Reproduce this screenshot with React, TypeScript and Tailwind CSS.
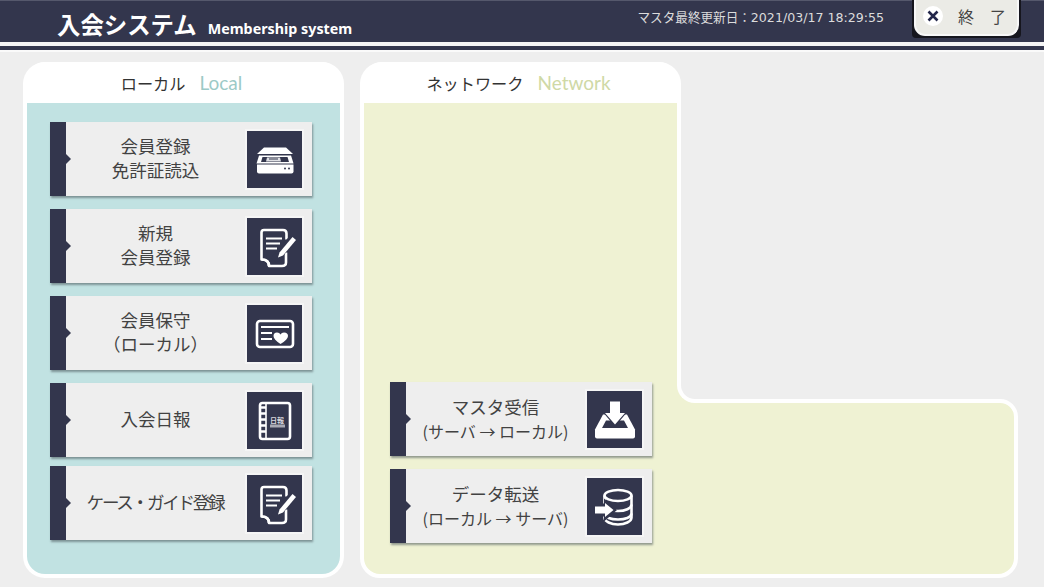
import type { ReactNode } from "react";

const jp = "font-['Noto_Sans_CJK_JP',sans-serif]";

const ScannerIcon = () => (
  <svg viewBox="0 0 55 56" className="w-full h-full">
    <path d="M17 16 H39 L46 22.5 H10 Z" fill="#fff" />
    <path d="M12 24 H44 L46.5 32 H9.5 Z" fill="#fff" />
    <path d="M15.5 25.5 H40.5 L42 30.5 H14 Z" fill="#33364d" />
    <path d="M20 26 H33 L34 30 H19 Z" fill="#dfe0e4" />
    <path d="M22 27.5 H31" stroke="#33364d" strokeWidth="1" />
    <path d="M10 33 H46.5 V40 Q46.5 42 44.5 42 H12 Q10 42 10 40 Z" fill="#fff" />
    <circle cx="38" cy="37" r="1" fill="#33364d" />
    <circle cx="42" cy="37" r="1" fill="#33364d" />
  </svg>
);

const NoteIcon = () => (
  <svg viewBox="0 0 55 56" className="w-full h-full">
    <path
      d="M39 34 V44 Q39 47.5 35 47.5 H22 Q22 41 14.5 41 V14 Q14.5 11.5 17 11.5 H36 Q39.5 11.5 39.5 15 V21"
      fill="none"
      stroke="#fff"
      strokeWidth="2.6"
      strokeLinejoin="round"
    />
    <path d="M14.5 41 Q22 41 22 47.5" fill="none" stroke="#fff" strokeWidth="2.6" />
    <path d="M19 20 H35 M19 25 H33 M19 30 H30" stroke="#fff" strokeWidth="2.2" />
    <path d="M27 42 L46 19.5" stroke="#33364d" strokeWidth="8" />
    <path d="M32.5 34 L45.5 18.5 L49 21.5 L36 37 L31 39 Z" fill="#fff" />
  </svg>
);

const CardIcon = () => (
  <svg viewBox="0 0 55 56" className="w-full h-full">
    <rect x="10" y="15.5" width="36" height="26" rx="3" fill="none" stroke="#fff" strokeWidth="2.6" />
    <path d="M14 21.5 H42 M14 27.5 H25 M14 33.5 H25" stroke="#fff" strokeWidth="2" />
    <path d="M33.5 38.5 Q26.5 34 26.5 30.5 Q26.5 27 30 27 Q32.5 27 33.5 29 Q34.5 27 37 27 Q41 27 41 30.5 Q41 34 33.5 38.5 Z" fill="#fff" />
  </svg>
);

const DiaryIcon = () => (
  <svg viewBox="0 0 55 56" className="w-full h-full">
    <rect x="13" y="10.5" width="30" height="36" rx="2.5" fill="none" stroke="#fff" strokeWidth="2.6" />
    <path d="M19 11 V46" stroke="#fff" strokeWidth="1.6" />
    <path d="M14 15 H19 M14 21 H19 M14 27 H19 M14 33 H19 M14 39 H19" stroke="#fff" strokeWidth="2.4" />
    <text x="23" y="30.5" fontSize="7" fontWeight="700" fill="#d8d8dc" fontFamily="Noto Sans CJK JP">
      日報
    </text>
    <rect x="23" y="32" width="15" height="3" fill="#a9aab4" />
  </svg>
);

const InboxIcon = () => (
  <svg viewBox="0 0 55 56" className="w-full h-full">
    <path d="M16 23 H40 L48 38 V45 Q48 47 46 47 H10 Q8 47 8 45 V38 Z" fill="#fff" />
    <path d="M19 29 H37 L41 36.5 H15 Z" fill="#33364d" />
    <path d="M21 9 H35 V19 H41.5 L28 35 L14.5 19 H21 Z" fill="#33364d" />
    <path d="M23 10 H33 V21.5 H38 L28 33 L18 21.5 H23 Z" fill="#fff" />
  </svg>
);

const DatabaseIcon = () => (
  <svg viewBox="0 0 55 56" className="w-full h-full">
    <g fill="none" stroke="#fff" strokeWidth="2.6">
      <ellipse cx="31" cy="17" rx="13.5" ry="5.5" />
      <path d="M17.5 17 V39 C17.5 43 24 46 31 46 C38 46 44.5 43 44.5 39 V17" />
      <path d="M17.5 26 C17.5 30 24 32.5 31 32.5 C38 32.5 44.5 30 44.5 26" />
      <path d="M17.5 35 C17.5 39 24 41 31 41 C38 41 44.5 39 44.5 35" />
    </g>
    <path d="M6 25 H17 V20 L30 31.5 L17 43 V38 H6 Z" fill="#33364d" />
    <path d="M8 28 H18 V24.5 L26.5 31.5 L18 38.5 V35 H8 Z" fill="#fff" />
  </svg>
);

interface MenuButtonProps {
  lines: string[];
  icon: ReactNode;
  small?: boolean;
  tight?: boolean;
  className?: string;
}

const MenuButton = ({ lines, icon, small, tight, className = "" }: MenuButtonProps) => (
  <div
    className={`relative flex items-center w-[262px] h-[74px] bg-[#eeeeee] shadow-[1px_2px_2px_rgba(70,80,85,0.55)] ${className}`}
  >
    <div className="relative self-stretch w-[16px] bg-[#33364d]">
      <div className="absolute left-full top-1/2 -translate-y-1/2 border-y-[5px] border-l-[5px] border-y-transparent border-l-[#33364d]" />
    </div>
    <div
      className={`flex-1 text-center text-[17.5px] leading-[24px] text-[#424242] ${jp} ${
        small ? "" : "pb-[2px]"
      } ${tight ? "tracking-[-2.2px] pr-[3px]" : "pr-[2px]"}`}
    >
      {lines.map((line, idx) => (
        <div key={idx} className={small && idx === 1 ? "text-[16px]" : ""}>
          {line}
        </div>
      ))}
    </div>
    <div className="w-[55px] h-[57px] mr-[10px] bg-[#33364d] ring-2 ring-[#f5f5f5]">{icon}</div>
  </div>
);

const PanelTitle = ({ ja, en, color }: { ja: string; en: string; color: string }) => (
  <div className="h-[41px] flex items-center justify-center gap-[14px] pt-px pr-[4px] bg-white rounded-t-[18px]">
    <span className={`text-[16.2px] text-[#333] ${jp}`}>{ja}</span>
    <span className={`text-[19px] font-['Lato',sans-serif] ${color}`}>{en}</span>
  </div>
);

export default function App() {
  return (
    <div className="w-[1044px] h-[587px] overflow-hidden bg-[#eeeeee]">
      {/* Header */}
      <div className="h-[42px] flex items-start bg-[#33364d] border-t border-[#55586c] text-white">
        <span className={`ml-[57px] mt-[6px] text-[23.4px] leading-[34px] font-bold ${jp}`}>入会システム</span>
        <span className="ml-[11px] mt-[17px] text-[14.3px] leading-[22px] font-bold font-['Noto_Sans',sans-serif]">
          Membership system
        </span>
        <span className="ml-auto mt-[8px] text-[12.6px] leading-[18px] text-[#dcdcdc] font-['DejaVu_Sans','Noto_Sans_CJK_JP',sans-serif]">
          マスタ最終更新日：2021/03/17 18:29:55
        </span>
        <div className="ml-[28px] mr-[23px] -mt-px w-[109px] h-[38px] px-[2px] pb-[2px] bg-[#16161e] rounded-b-[4px]">
          <div className="h-full flex items-center pl-[7px] pb-[3px] bg-[#ebebe6] border-x-2 border-b-2 border-[#f8f8f8] rounded-b-[11px]">
            <div className="w-[20px] h-[20px] rounded-full bg-white flex items-center justify-center">
              <svg viewBox="0 0 14 14" className="w-[14px] h-[14px]">
                <path d="M2.5 2.5 L11.5 11.5 M11.5 2.5 L2.5 11.5" stroke="#23264a" strokeWidth="2.6" />
              </svg>
            </div>
            <span className={`ml-[15px] text-[16px] leading-[20px] text-[#444] ${jp}`}>終　了</span>
          </div>
        </div>
      </div>
      <div className="h-[3.5px] bg-[#f4f4f4]" />
      <div className="h-[4.5px] bg-[#33364d]" />
      <div className="h-[2px] bg-[#fafafa]" />

      <div className="flex items-start pt-[10px] pl-[23px] gap-[16px]">
        {/* Local */}
        <div className="w-[321px] h-[516px] flex flex-col px-[4px] pb-[4px] bg-white rounded-[22px]">
          <PanelTitle ja="ローカル" en="Local" color="text-[#9ccac7]" />
          <div className="flex-1 flex flex-col pt-[19px] pl-[23px] bg-[#c1e2e2] rounded-b-[18px]">
            <MenuButton lines={["会員登録", "免許証読込"]} icon={<ScannerIcon />} />
            <MenuButton className="mt-[13px]" lines={["新規", "会員登録"]} icon={<NoteIcon />} />
            <MenuButton className="mt-[13px]" lines={["会員保守", "（ローカル）"]} icon={<CardIcon />} />
            <MenuButton className="mt-[13px]" lines={["入会日報"]} icon={<DiaryIcon />} />
            <MenuButton className="mt-[9px]" lines={["ケース・ガイド登録"]} icon={<NoteIcon />} tight />
          </div>
        </div>

        {/* Network: L-shaped panel */}
        <div className="relative w-[658px] h-[516px] flex flex-col">
          <div className="relative z-10 w-[321px] h-[341px] -mb-[4px] flex flex-col px-[4px] bg-white rounded-t-[22px]">
            <PanelTitle ja="ネットワーク" en="Network" color="text-[#cfd9a6]" />
            <div className="flex-1 bg-[#eff2d3]" />
          </div>
          {/* inner corner of the L */}
          <div className="absolute z-10 left-[317px] top-[321px] w-[20px] h-[20px] bg-[#eff2d3]">
            <div className="w-full h-full bg-[#eeeeee] border-l-4 border-b-4 border-white rounded-bl-[18px]" />
          </div>
          <div className="flex-1 pl-[26px] border-4 border-white bg-[#eff2d3] rounded-tr-[18px] rounded-b-[20px]">
            <div className="relative z-20 -mt-[21px] flex flex-col gap-[13px]">
              <MenuButton lines={["マスタ受信", "(サーバ → ローカル)"]} icon={<InboxIcon />} small />
              <MenuButton lines={["データ転送", "(ローカル → サーバ)"]} icon={<DatabaseIcon />} small />
            </div>
          </div>
        </div>
      </div>
    </div>
  );
}
